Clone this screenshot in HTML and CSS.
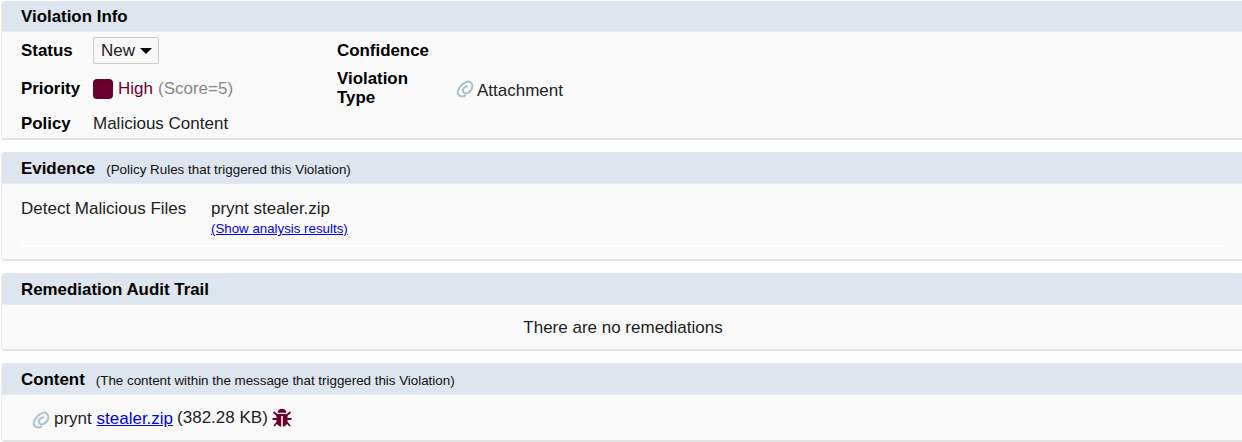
FILE: index.html
```html
<!DOCTYPE html>
<html lang="en">
<head>
<meta charset="utf-8">
<title>Violation</title>
<link rel="stylesheet" href="styles.css">
</head>
<body>
<svg class="symbols" width="0" height="0">
  <symbol id="clip" viewBox="0 0 18 18">
    <path d="M9 15.700C6.500 17.100 3.400 16.500 2.200 14.200C1.100 12 1.900 9.400 3.700 7.300C5.800 4.800 8 2.300 11 1.700C14.200 1.100 16.500 3.500 16.400 6.400C16.200 9 14 11.700 11.700 12.900C9.700 13.900 7.300 13.300 6.900 11.300C6.500 9 8.400 7.200 11 6.200" fill="none" stroke="#abc4d1" stroke-width="2" stroke-linecap="round"/>
  </symbol>
</svg>
<main class="page">
  <section class="panel info">
    <header class="panel-head"><h2>Violation Info</h2></header>
    <div class="info-body">
      <dl class="facts">
        <dt class="status-label">Status</dt>
        <dd><button class="status" type="button"><span>New</span><svg width="12" height="6" viewBox="0 0 12 6"><path d="M0 0H12L6 6Z"/></svg></button></dd>
        <dt>Priority</dt>
        <dd class="priority"><i class="swatch"></i><span class="high">High</span><span class="score">(Score=5)</span></dd>
        <dt>Policy</dt>
        <dd><span class="policy">Malicious Content</span></dd>
      </dl>
      <dl class="facts second">
        <dt><span class="confidence">Confidence</span></dt>
        <dd></dd>
        <dt class="type-label">Violation<br>Type</dt>
        <dd class="attachment"><svg class="clip" width="18" height="18"><use href="#clip"/></svg><span>Attachment</span></dd>
      </dl>
    </div>
  </section>
  <section class="panel evidence">
    <header class="panel-head"><h2 class="evidence-title">Evidence</h2><small class="rules">(Policy Rules that triggered this Violation)</small></header>
    <div class="evidence-row">
      <span class="rule">Detect Malicious Files</span>
      <div class="match"><span>prynt stealer.zip</span><a class="results" href="#">(Show analysis results)</a></div>
    </div>
  </section>
  <section class="panel audit">
    <header class="panel-head"><h2 class="audit-title">Remediation Audit Trail</h2></header>
    <p class="empty"><span>There are no remediations</span></p>
  </section>
  <section class="panel content">
    <header class="panel-head"><h2 class="content-title">Content</h2><small class="message">(The content within the message that triggered this Violation)</small></header>
    <div class="file">
      <svg class="clip" width="18" height="18"><use href="#clip"/></svg>
      <span class="name">prynt <a href="#">stealer.zip</a></span><span class="size">(382.28 KB)</span>
      <svg class="bug" width="20" height="20" viewBox="0 0 20 20">
        <path d="M5.500 4.800C5.800 2.200 7.500.8 10 .8s4.200 1.400 4.500 4Z"/>
        <path d="M4.500 6H15.500V13.500C15.500 16.500 13 18.500 10.800 18.800V8H9.200V18.800C7 18.500 4.500 16.500 4.500 13.500Z"/>
        <path d="M1.500 4 5.500 7.500M18.500 4 14.500 7.500M.5 11H5M15 11H19.500M5.500 14 2 18M14.500 14 18 18" class="legs"/>
      </svg>
    </div>
  </section>
</main>
</body>
</html>
```
FILE: styles.css
```css
* { box-sizing: border-box; }
body {
  margin: 0;
  background: #fff;
  color: #222;
  font: 17px/20px "Liberation Sans", Arial, sans-serif;
  overflow: hidden;
}
.symbols { position: absolute; }
.page {
  display: flex;
  flex-direction: column;
  padding: 1px 0 0 1px;
  height: 442px;
}
.panel {
  flex: none;
  width: 1250px;
  background: #fafafa;
  border: 1px solid #ebebeb;
  border-bottom: 2px solid #e3e3e3;
  border-top-color: #e3e7ec;
  border-radius: 4px;
  overflow: hidden;
}
.info { height: 138.500px; border-top-color: #dde5ee; }
.evidence { height: 109px; margin-top: 12.500px; }
.audit { height: 78px; margin-top: 12px; }
.content { height: 79px; margin-top: 12px; }
.panel-head {
  display: flex;
  align-items: baseline;
  height: 31px;
  padding: 6px 0 0 19px;
  background: #dde5ee;
  border-bottom: 1px solid #eaeef3;
  white-space: nowrap;
}
.info .panel-head { height: 30px; padding-top: 5px; }
h2 {
  margin: 0;
  color: #000;
  font-size: 16.900px;
  line-height: 20px;
}
small { font-size: 13.400px; line-height: 16px; color: #111; }
.rules { margin-left: 11px; }
.message { margin-left: 11px; letter-spacing: -.02px; }
.info-body {
  display: flex;
  padding: 0 0 0 19px;
}
.facts {
  display: grid;
  grid-template-columns: 72px 244px;
  grid-template-rows: 37px 39px 32px;
  align-items: center;
  margin: 0;
  white-space: nowrap;
}
.facts.second { grid-template-columns: 120px 240px; }
dt { color: #000; font-size: 16.900px; font-weight: bold; }
dd { margin: 0; }
.status {
  display: flex;
  align-items: center;
  gap: 5px;
  width: 66px;
  height: 27px;
  padding: 0 6px 0 7px;
  border: 1px solid #ccc;
  border-radius: 2px;
  background: #f8f8f8;
  color: #222;
  font: inherit;
}
.status svg { flex: none; }
.priority { display: flex; align-items: center; }
.swatch {
  width: 20px;
  height: 20px;
  margin-right: 5px;
  border-radius: 4px;
  background: #6a002c;
}
.high { color: #6a002c; margin-right: 5px; }
.score { color: #888; }
.type-label { line-height: 19px; padding-bottom: 2px; }
.attachment { display: flex; align-items: center; padding-top: 4px; }
.clip { flex: none; }
.attachment .clip { margin: -4px 0 0 -1px; }
.attachment span { margin-left: 3px; }
.evidence-row {
  display: flex;
  margin: 0 17px 0 19px;
  width: 1204px;
  height: 63px;
  padding-top: 15px;
  border-bottom: 2px solid #fff;
}
.rule { width: 190px; white-space: nowrap; }
.match { display: flex; flex-direction: column; }
.results { font-size: 13.300px; line-height: 20px; }
a { color: #00e; }
.empty { margin: 0; padding-top: 13px; width: 1242px; text-align: center; }
.file {
  display: flex;
  align-items: center;
  padding: 11px 0 0 30px;
  height: 35px;
  white-space: nowrap;
}
.name { margin-left: 4px; padding-top: 2px; }
.size { margin-left: 4px; }
.file .clip { margin-top: 3px; }
.bug { margin-left: 4px; fill: #6a002c; }
.legs { fill: none; stroke: #6a002c; stroke-width: 1.8; }
```
